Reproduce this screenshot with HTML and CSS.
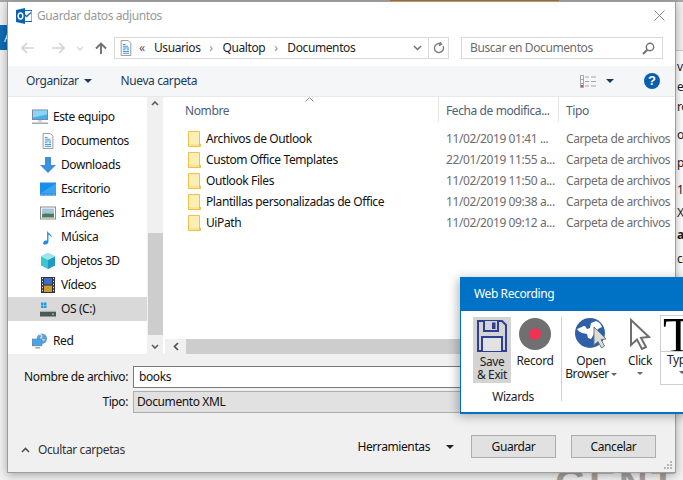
FILE: index.html
```html
<!DOCTYPE html>
<html lang="es">
<head>
<meta charset="utf-8">
<title>Guardar datos adjuntos</title>
<link rel="stylesheet" href="styles.css">
</head>
<body>
<div class="desk">
  <div class="back-top"><span class="back-accent"></span></div>
  <div class="back-tab">A</div>
  <div class="back-right">
    <span class="bl l1">ve</span><span class="bl l2">ef</span><span class="bl l3">re</span><span class="bl l4">o</span><span class="bl l5">po</span><span class="bl l6">1/</span><span class="bl l7">X</span><span class="bl l8">ac</span><span class="bl l9">co</span>
  </div>
  <div class="back-big">GENT</div>

  <section class="dialog">
    <header class="titlebar">
      <svg class="ic16" viewBox="0 0 16 16"><rect x="6" y="2.5" width="10" height="11" fill="#fff" stroke="#0f6cbd"/><path d="M8 6l2.5 2.5L15 4.5" fill="none" stroke="#0f6cbd" stroke-width="1.3"/><path d="M0 2l9-2v16l-9-2z" fill="#0a64b0"/><ellipse cx="4.5" cy="8" rx="2.3" ry="3" fill="none" stroke="#fff" stroke-width="1.4"/></svg>
      <span class="title">Guardar datos adjuntos</span>
      <svg class="close" viewBox="0 0 11 11"><path d="M.5.5l10 10M10.500.5l-10 10" stroke="#8a8a8a" fill="none"/></svg>
    </header>

    <div class="navbar">
      <div class="navbtns">
        <svg class="nav-a" viewBox="0 0 14 12"><path d="M1 6h12M6 1L1 6l5 5" fill="none" stroke="#d3d3d3" stroke-width="1.6"/></svg>
        <svg class="nav-a" viewBox="0 0 14 12"><path d="M1 6h12M8 1l5 5-5 5" fill="none" stroke="#d3d3d3" stroke-width="1.6"/></svg>
        <svg class="nav-d" viewBox="0 0 8 5"><path d="M1 1l3 3 3-3" fill="none" stroke="#d3d3d3" stroke-width="1.2"/></svg>
        <svg class="nav-u" viewBox="0 0 12 12"><path d="M6 12V1.500M1 6.500l5-5 5 5" fill="none" stroke="#707070" stroke-width="1.9"/></svg>
      </div>
      <div class="address">
        <svg class="ic16 addr-ic" viewBox="0 0 16 18"><path d="M2.500.5h8l3 3v14h-11z" fill="#fff" stroke="#8c8c8c"/><path d="M4.500 5h3M4.500 7h6M4.500 9h7M4.500 11h3M9 11h2.500M4.500 13h7M4.500 15h7" stroke="#2a8ad4"/></svg>
        <span class="chev">«</span>
        <span class="crumb">Usuarios</span><span class="sep">›</span>
        <span class="crumb">Qualtop</span><span class="sep">›</span>
        <span class="crumb">Documentos</span>
        <svg class="addr-drop" viewBox="0 0 9 6"><path d="M1 1l3.500 3.500L8 1" fill="none" stroke="#707070" stroke-width="1.5"/></svg>
        <span class="addr-refresh"><svg class="refresh" viewBox="0 0 12 13"><path d="M10 4a4.500 4.500 0 1 1-2-2M7 0l1.500 2.300L6 3.500" fill="none" stroke="#808080" stroke-width="1.4"/></svg></span>
      </div>
      <div class="search">
        <span>Buscar en Documentos</span>
        <svg class="search-ic" viewBox="0 0 13 13"><circle cx="8" cy="5" r="3.700" fill="none" stroke="#707070" stroke-width="1.400"/><path d="M5.300 7.700L1 12" stroke="#707070" stroke-width="2"/></svg>
      </div>
    </div>

    <div class="toolbar">
      <span class="tool">Organizar</span><i class="tri tri-org"></i>
      <span class="tool tool-new">Nueva carpeta</span>
      <svg class="viewic" viewBox="0 0 17 13"><path d="M.5.500h3v12h-3zM.5 4.500h3M.5 8.500h3" fill="none" stroke="#a5a5a5"/><path d="M5 2h4M11 2h5M5 6.500h4M11 6.500h5M5 11h4M11 11h5" stroke="#a5a5a5"/><rect x="1" y="10" width="2" height="2" fill="#d05050"/></svg>
      <i class="tri tri-view"></i>
      <span class="help">?</span>
    </div>

    <div class="main">
      <nav class="side">
        <div class="tree">
          <div class="item top"><svg class="ic-side" viewBox="0 0 16 15"><rect x=".5" y=".5" width="15" height="9.500" fill="#42b0ee" stroke="#7a8a99"/><path d="M1 1h14v4L1 8z" fill="#8fd4f8"/><path d="M6 11h4v1H6zM0 13h16v1.500H0z" fill="#a0a8b0"/></svg>Este equipo</div>
          <div class="item sub"><svg class="ic-side" viewBox="0 0 16 18"><path d="M2.500.5h8l3 3v14h-11z" fill="#fff" stroke="#8c8c8c"/><path d="M4.500 5h3M4.500 7h6M4.500 9h7M4.500 11h3M9 11h2.500M4.500 13h7M4.500 15h7" stroke="#2a8ad4"/></svg>Documentos</div>
          <div class="item sub"><svg class="ic-side" viewBox="0 0 16 16"><path d="M5 0h6v8h5l-8 8-8-8h5z" fill="#3f8fe0"/></svg>Downloads</div>
          <div class="item sub"><svg class="ic-side" viewBox="0 0 16 13"><rect width="16" height="12" fill="#1a8fe8"/><path d="M0 11l16-10v10z" fill="#3aa4f0"/><path d="M1 12h14" stroke="#fff" stroke-dasharray="1 3"/><path d="M0 12.500h16" stroke="#0b5fa8"/></svg>Escritorio</div>
          <div class="item sub"><svg class="ic-side" viewBox="0 0 16 13"><rect x=".5" y=".5" width="15" height="12" fill="#fff" stroke="#8c8c8c"/><rect x="2" y="2" width="12" height="9" fill="#a5c5dc"/><path d="M2 8c4-2 7 0 12-1v4H2z" fill="#4f7a58"/></svg>Imágenes</div>
          <div class="item sub"><svg class="ic-side" viewBox="0 0 16 18"><path d="M7 1c0 4 6 4 5 9-1-2-2-3-3.500-3.400V14c0 2-2 3.500-4 3.500S2 16 3 14.500 5.500 12.800 7 13z" fill="#1b8ce8"/></svg>Música</div>
          <div class="item sub"><svg class="ic-side" viewBox="0 0 16 16"><path d="M8 0l7 3.500v9L8 16l-7-3.500v-9z" fill="#3cc4cf"/><path d="M8 7l7-3.500v9L8 16z" fill="#1f9bc4"/><path d="M8 0l7 3.500L8 7 1 3.500z" fill="#9be6ea"/></svg>Objetos 3D</div>
          <div class="item sub"><svg class="ic-side" viewBox="0 0 16 16"><rect x="1" width="14" height="16" fill="#2c3038"/><rect x="4" y="1" width="8" height="6.500" fill="#3a6fc4"/><rect x="4" y="8.500" width="8" height="6.500" fill="#c89a30"/><path d="M2 1.500h1M2 4.500h1M2 7.500h1M2 10.500h1M2 13.500h1M13 1.500h1M13 4.500h1M13 7.500h1M13 10.500h1M13 13.500h1" stroke="#ddd" stroke-width="1.500"/></svg>Vídeos</div>
          <div class="item sub selected"><svg class="ic-side" viewBox="0 0 16 15"><path d="M1 1h2.500v2.500H1zM4 1h2.500v2.500H4zM1 4h2.500v2.500H1zM4 4h2.500v2.500H4z" fill="#1e9be8"/><rect x="0" y="10" width="16" height="5" fill="#4f5458"/><path d="M1 9h14l1 1H0z" fill="#c4c8cc"/><rect x="12" y="12" width="2" height="1.500" fill="#5fd060"/></svg>OS (C:)</div>
          <div class="item top net"><svg class="ic-side" viewBox="0 0 16 17"><circle cx="10" cy="6" r="5.500" fill="#5f9ed8"/><path d="M7 2c3-1 4 2 2 3s2 3 4 2" stroke="#d8e8f4" fill="none" stroke-width="1.300"/><rect y="6.500" width="10" height="7" fill="#3ea8ec" stroke="#6a8aa4"/><path d="M3 15h5v1.500H3z" fill="#90a0ac"/></svg>Red</div>
        </div>
        <div class="vscroll">
          <svg class="sb-arrow" viewBox="0 0 8 5"><path d="M1 4l3-3 3 3" fill="none" stroke="#606060" stroke-width="1.700"/></svg>
          <div class="vthumb"></div>
          <svg class="sb-arrow" viewBox="0 0 8 5"><path d="M1 1l3 3 3-3" fill="none" stroke="#606060" stroke-width="1.700"/></svg>
        </div>
      </nav>

      <div class="files">
        <div class="colhead">
          <span class="hcell hname">Nombre<svg class="sort" viewBox="0 0 9 5"><path d="M.5 4.500l4-4 4 4" fill="none" stroke="#8a8a8a"/></svg></span>
          <span class="hcell">Fecha de modifica...</span>
          <span class="hcell">Tipo</span>
        </div>
        <div class="rows">
          <div class="row"><span class="fname"><svg class="folder" viewBox="0 0 13 16"><use href="#fld"/></svg>Archivos de Outlook</span><span class="meta">11/02/2019 01:41 ...</span><span class="meta">Carpeta de archivos</span></div>
          <div class="row"><span class="fname"><svg class="folder" viewBox="0 0 13 16"><use href="#fld"/></svg>Custom Office Templates</span><span class="meta">22/01/2019 11:55 a...</span><span class="meta">Carpeta de archivos</span></div>
          <div class="row"><span class="fname"><svg class="folder" viewBox="0 0 13 16"><use href="#fld"/></svg>Outlook Files</span><span class="meta">11/02/2019 11:50 a...</span><span class="meta">Carpeta de archivos</span></div>
          <div class="row"><span class="fname"><svg class="folder" viewBox="0 0 13 16"><use href="#fld"/></svg>Plantillas personalizadas de Office</span><span class="meta">11/02/2019 09:38 a...</span><span class="meta">Carpeta de archivos</span></div>
          <div class="row"><span class="fname"><svg class="folder" viewBox="0 0 13 16"><use href="#fld"/></svg>UiPath</span><span class="meta">11/02/2019 09:12 a...</span><span class="meta">Carpeta de archivos</span></div>
        </div>
        <div class="hscroll">
          <svg class="hs-arrow" viewBox="0 0 6 9"><path d="M5 1L1.500 4.500 5 8" fill="none" stroke="#505050" stroke-width="1.700"/></svg>
          <div class="hthumb"></div>
        </div>
      </div>
    </div>

    <div class="form">
      <label class="flabel">Nombre de archivo:</label><div class="finput">books</div>
      <label class="flabel">Tipo:</label><div class="fselect">Documento XML</div>
    </div>

    <footer class="actions">
      <svg class="hide-ic" viewBox="0 0 9 6"><path d="M1 5l3.500-3.500L8 5" fill="none" stroke="#505050" stroke-width="1.600"/></svg>
      <span class="hide">Ocultar carpetas</span>
      <span class="tools">Herramientas</span><i class="tri tri-tools"></i>
      <button class="btn btn-save">Guardar</button>
      <button class="btn">Cancelar</button>
      <svg class="grip" viewBox="0 0 9 9"><path d="M6 0h2v2H6zM3 3h2v2H3zM6 3h2v2H6zM0 6h2v2H0zM3 6h2v2H3zM6 6h2v2H6z" fill="#b8b8b8"/></svg>
    </footer>
  </section>

  <section class="recorder">
    <header class="rec-title">Web Recording</header>
    <div class="ribbon">
      <div class="group">
        <div class="group-items">
          <div class="rbtn save">
            <svg class="save-ic" viewBox="0 0 30 32"><path d="M1 1h24l4 4v26H1z" fill="#d4d4d4" stroke="#2f3f95" stroke-width="2"/><path d="M7 1v10h14V1" fill="#d4d4d4" stroke="#2f3f95" stroke-width="2"/><rect x="15" y="2.500" width="3.500" height="6.500" fill="#2f3f95"/><path d="M5 31V17h20v14" fill="#e2e2e2" stroke="#2f3f95" stroke-width="2"/></svg>
            <span>Save</span><span>&amp; Exit</span>
          </div>
          <div class="rbtn rec">
            <svg class="rec-ic" viewBox="0 0 32 32"><circle cx="16" cy="16" r="16" fill="#707073"/><circle cx="16" cy="16" r="6" fill="#ee3355"/></svg>
            <span>Record</span>
          </div>
        </div>
        <div class="group-name">Wizards</div>
      </div>
      <div class="group-div"></div>
      <div class="rbtn open">
        <svg class="globe" viewBox="0 0 32 32"><circle cx="15" cy="15" r="15" fill="#2f5fa8"/><path d="M2 11c4-1 5-3 8-3l2 3 3-1 1-5 5-2c3 1 5 3 6 6l-4 2-4 5-3 5-3-1-1-4-5-1c-2-1-4-2-5-4z" fill="#fff"/><path d="M19 9l12 12-5 .5 3.500 6.500-3 2-3.500-6.500L19 27z" fill="#dcdcdc" stroke="#777"/></svg>
        <span>Open</span><span class="withcaret">Browser<i class="mini"></i></span>
      </div>
      <div class="rbtn click">
        <svg class="cursor" viewBox="0 0 22 32"><path d="M2 2l18 17-8 .8L17 29l-4 2-5-9.500L2 27z" fill="#fff" stroke="#6e6e6e" stroke-width="2"/></svg>
        <span>Click</span><i class="mini block"></i>
      </div>
      <div class="typebox">
        <div class="type-t">T</div>
        <div class="type-label"><span>Typ</span><i class="mini block"></i></div>
      </div>
    </div>
  </section>

  <svg class="defs" width="0" height="0"><defs><g id="fld"><path d="M.5.500h11v12.500h1v2.500H.5z" fill="#fde48e" stroke="#eec14c"/><path d="M1 1h10v12H1z" fill="#fdeeb4"/><path d="M11.500 12v3.500" stroke="#eec14c"/></g></defs></svg>
</div>
</body>
</html>
```

FILE: styles.css
```css
* { box-sizing: border-box; }
html, body { margin: 0; padding: 0; }
body {
  width: 683px; height: 480px; overflow: hidden;
  font: 12px/16px "Noto Sans", "Open Sans", sans-serif;
  letter-spacing: -.4px;
  color: #1a1a1a;
}
svg { display: block; flex: none; }
.defs { position: absolute; }
.desk { position: relative; width: 683px; height: 480px; overflow: hidden; background: #f1f1f1; }

/* application behind the dialog */
.back-top { position: absolute; left: 0; top: 0; width: 683px; height: 2px; background: #a8a8a8; }
.back-accent { position: absolute; left: 390px; top: 0; width: 169px; height: 1px; background: #b8741a; }
.back-tab { position: absolute; left: 0; top: 25px; width: 8px; height: 25px; background: #0e6cb5; color: #fff; line-height: 25px; padding-left: 4px; overflow: hidden; }
.back-right { position: absolute; left: 675px; top: 50px; width: 8px; height: 230px; background: #fff; border-top: 1px solid #ccc; }
.bl { position: absolute; left: 2px; line-height: 14px; }
.l1 { top: 9px; } .l2 { top: 29px; } .l3 { top: 49px; } .l4 { top: 77px; } .l5 { top: 105px; }
.l6 { top: 132px; } .l7 { top: 155px; } .l8 { top: 177px; font-weight: 700; } .l9 { top: 201px; }
.back-big { position: absolute; left: 555px; top: 463px; font: 700 40px/40px "Liberation Sans", sans-serif; letter-spacing: 3px; color: #a99f98; }

/* dialog */
.dialog {
  position: absolute; left: 7px; top: 1px; width: 669px; height: 472px;
  display: flex; flex-direction: column;
  background: #fff; border: 1px solid #9d9d9d;
  box-shadow: 0 2px 9px rgba(0,0,0,.32);
}
.titlebar { height: 30px; flex: none; display: flex; align-items: center; padding: 0 10px 2px 8px; }
.ic16 { width: 16px; height: 16px; }
.title { margin-left: 5px; flex: 1; color: #999; }
.close { width: 11px; height: 11px; margin-top: -1px; }

.navbar { height: 34px; flex: none; display: flex; align-items: center; padding: 0 11px 2px 0; }
.navbtns { width: 106px; flex: none; display: flex; align-items: center; }
.nav-a { width: 14px; height: 12px; margin-left: 13px; }
.nav-a + .nav-a { margin-left: 16px; }
.nav-d { width: 8px; height: 5px; margin-left: 11px; }
.nav-u { width: 12px; height: 12px; margin-left: 11px; }
.address {
  width: 335px; height: 22px; flex: none; display: flex; align-items: center;
  border: 1px solid #d9d9d9; padding-left: 4px; color: #222;
}
.addr-ic { width: 14px; height: 18px; }
.chev { margin-left: 6px; width: 14px; color: #555; line-height: 14px; }
.crumb { margin-left: 1px; }
.sep { width: 21px; text-align: center; color: #888; }
.addr-drop { width: 9px; height: 6px; margin-left: auto; margin-right: 6px; }
.addr-refresh { width: 20px; height: 20px; border-left: 1px solid #d9d9d9; display: flex; align-items: center; justify-content: center; }
.refresh { width: 12px; height: 13px; }
.search {
  width: 202px; height: 22px; margin-left: 12px; flex: none; display: flex; align-items: center; justify-content: space-between;
  border: 1px solid #d9d9d9; padding: 0 7px 0 8px; color: #6d6d6d;
}
.search-ic { width: 13px; height: 13px; }

.toolbar { height: 31px; flex: none; display: flex; align-items: center; background: #f5f6f7; border-bottom: 1px solid #e8e8e8; padding-left: 18px; color: #1e3a5a; }
.tri { width: 0; height: 0; border-left: 4px solid transparent; border-right: 4px solid transparent; border-top: 4px solid #1e3a5a; flex: none; }
.tri-org { margin-left: 5px; }
.tool-new { margin-left: 29px; }
.viewic { width: 17px; height: 13px; margin-left: auto; }
.tri-view { margin-left: 9px; }
.help { width: 16px; height: 16px; margin: 0 15px 0 30px; border-radius: 50%; background: #0a5eb0; color: #fff; font: 700 13px/16px "Liberation Sans", sans-serif; letter-spacing: 0; text-align: center; }

.main { height: 257px; flex: none; display: flex; }
.side { width: 155px; flex: none; display: flex; }
.tree { width: 139px; flex: none; padding-top: 8px; }
.item { height: 24px; display: flex; align-items: center; color: #111; }
.ic-side { width: 16px; height: 16px; margin-right: 5px; }
.item.top { padding-left: 24px; }
.item.sub { padding-left: 32px; }
.item.sub .ic-side { margin-right: 5px; }
.item.selected { background: #d9d9d9; }
.item.net { margin-top: 8px; }
.vscroll { width: 16px; flex: none; background: #f0f0f0; display: flex; flex-direction: column; align-items: center; padding-top: 4px; margin-bottom: 0; }
.sb-arrow { width: 8px; height: 5px; }
.vthumb { width: 15px; height: 102px; margin: 127px 0 9px; background: #cdcdcd; }

.files { flex: 1; min-width: 0; display: flex; flex-direction: column; padding-left: 2px; }
.colhead { height: 26px; flex: none; display: grid; grid-template-columns: 274px 120px 1fr; }
.hcell { position: relative; padding: 6px 0 0 7px; color: #4c607a; border-right: 1px solid #e5e5e5; height: 25px; }
.hcell:last-child { border-right: 0; }
.hname { padding-left: 20px; }
.sort { position: absolute; left: 140px; top: 0; width: 9px; height: 5px; }
.rows { flex: 1; padding-top: 5px; }
.row { height: 21px; display: grid; grid-template-columns: 274px 120px 1fr; align-items: center; }
.fname { display: flex; align-items: center; padding-left: 23px; color: #111; white-space: nowrap; }
.folder { width: 13px; height: 16px; margin-right: 5px; }
.meta { padding-left: 7px; color: #6d6d6d; white-space: nowrap; }
.hscroll { height: 15px; flex: none; display: flex; align-items: center; background: #f0f0f0; padding-left: 8px; margin-bottom: 0; }
.hs-arrow { width: 6px; height: 9px; margin-right: 7px; }
.hthumb { flex: 1; height: 15px; background: #cdcdcd; }

.form { height: 60px; flex: none; background: #f0f0f0; display: grid; grid-template-columns: 120px 1fr; column-gap: 5px; row-gap: 3px; grid-auto-rows: 22px; padding: 12px 0 0; align-content: start; color: #111; }
.flabel { text-align: right; line-height: 22px; }
.finput { border: 1px solid #7a7a7a; background: #fff; padding-left: 5px; line-height: 20px; }
.fselect { border: 1px solid #adadad; background: #e1e1e1; padding-left: 3px; line-height: 20px; }

.actions { position: relative; flex: 1; min-height: 0; background: #f0f0f0; display: flex; align-items: center; padding: 7px 19px 0 13px; color: #111; }
.hide-ic { width: 9px; height: 6px; margin-top: 6px; }
.hide { margin-left: 8px; margin-top: 6px; color: #333; }
.tools { margin-left: auto; }
.tri-tools { margin-left: 16px; border-top-color: #222; }
.btn { width: 85px; height: 23px; margin-left: 15px; padding: 0; font: inherit; letter-spacing: inherit; color: #111; background: #e1e1e1; border: 1px solid #adadad; }
.btn-save { margin-left: 17px; }
.grip { position: absolute; right: 2px; bottom: 2px; width: 9px; height: 9px; }

/* floating recorder */
.recorder { position: absolute; left: 460px; top: 277px; width: 230px; height: 137px; display: flex; flex-direction: column; background: #fff; border: 1px solid #0072c6; border-width: 0 1px 2px; box-shadow: -2px 2px 10px rgba(0,0,0,.3); color: #222; }
.rec-title { height: 34px; flex: none; background: #0072c6; color: #fff; padding-left: 13px; line-height: 34px; }
.ribbon { flex: 1; display: flex; align-items: flex-start; padding: 6px 0 0 12px; }
.group { width: 88px; flex: none; }
.group-items { display: flex; }
.rbtn { display: flex; flex-direction: column; align-items: center; line-height: 13px; flex: none; }
.rbtn span { display: block; }
.save { width: 38px; height: 66px; background: #d4d4d4; padding-top: 3px; }
.save-ic { width: 30px; height: 32px; margin-bottom: 3px; }
.rec { width: 48px; padding-top: 0; margin-left: 0; }
.rec-ic { width: 32px; height: 32px; margin: 1px 0 4px; }
.group-name { text-align: center; margin-top: 6px; width: 80px; }
.group-div { width: 1px; height: 84px; background: #d0d0d0; flex: none; }
.open { width: 58px; margin-left: 0; padding-top: 1px; }
.globe { width: 32px; height: 32px; margin-bottom: 4px; }
.withcaret { position: relative; }
.mini { display: inline-block; width: 0; height: 0; border-left: 3px solid transparent; border-right: 3px solid transparent; border-top: 3px solid #666; margin-left: 2px; vertical-align: 2px; }
.mini.block { display: block; margin: 5px auto 0; }
.click { width: 40px; padding-top: 1px; }
.cursor { width: 22px; height: 32px; margin-bottom: 4px; }
.typebox { width: 60px; height: 70px; margin-top: -2px; border: 1px solid #cfcfcf; flex: none; }
.type-t { height: 36px; border-bottom: 1px solid #cfcfcf; font: 50px/38px "Liberation Serif", serif; color: #000; padding-left: 2px; overflow: hidden; letter-spacing: 0; }
.type-label { padding: 1px 0 0 6px; line-height: 13px; width: 36px; text-align: left; }
```
